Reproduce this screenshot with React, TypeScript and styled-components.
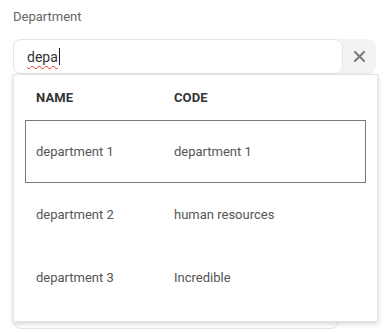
import React from "react";
import styled, { createGlobalStyle } from "styled-components";

const Global = createGlobalStyle`
  html, body { margin: 0; padding: 0; background: #ffffff; }
  body { font-family: Roboto, "Liberation Sans", Arial, sans-serif; }
  * { box-sizing: border-box; }
`;

const Page = styled.div`
  padding: 9px 12px 0 13px;
  width: 388px;
  height: 332px;
  overflow: hidden;
`;

const Label = styled.div`
  font-size: 13px;
  line-height: 16px;
  color: #666666;
  margin-bottom: 14px;
`;

const Field = styled.div`
  position: relative;
`;

const InputRow = styled.div`
  display: flex;
  width: 363px;
  height: 35px;
  background: #f2f3f5;
  border-radius: 8px;
`;

const InputBox = styled.div`
  width: 330px;
  height: 35px;
  background: #ffffff;
  border: 1px solid #e2e7ee;
  border-radius: 8px;
  display: flex;
  align-items: center;
  padding-left: 13px;
  font-size: 14px;
  color: #333333;
`;

const Typed = styled.span`
  text-decoration: underline wavy #e53935;
  text-decoration-thickness: 1px;
  text-underline-offset: 3px;
`;

const Caret = styled.span`
  display: inline-block;
  width: 1px;
  height: 17px;
  background: #222222;
  margin-left: 1px;
`;

const ClearButton = styled.button`
  flex: 1;
  border: none;
  background: transparent;
  display: flex;
  align-items: center;
  justify-content: center;
  padding: 0;
  cursor: pointer;
`;

const NextField = styled.div`
  margin-top: 14px;
  width: 326px;
  height: 241px;
  border: 1px solid #e2e7ee;
  border-radius: 8px;
  background: #ffffff;
`;

const Dropdown = styled.div`
  position: absolute;
  top: 35px;
  left: 0;
  width: 365px;
  height: 248px;
  background: #ffffff;
  border: 1px solid #e4e4e4;
  box-shadow: 0 2px 5px rgba(0, 0, 0, 0.16);
  padding: 0 11px;
  z-index: 2;
`;

const HeaderRow = styled.div`
  display: grid;
  grid-template-columns: 138px 1fr;
  height: 45px;
  align-items: center;
  padding: 0 11px;
  font-size: 13px;
  font-weight: 700;
  color: #333333;
  letter-spacing: 0.1px;
`;

const Row = styled.div<{ $selected?: boolean }>`
  display: grid;
  grid-template-columns: 138px 1fr;
  height: 63px;
  align-items: center;
  padding: 0 10px;
  font-size: 13px;
  color: #555555;
  border: 1px solid ${(p) => (p.$selected ? "#7a7a7a" : "transparent")};
`;

const rows = [
  { name: "department 1", code: "department 1" },
  { name: "department 2", code: "human resources" },
  { name: "department 3", code: "Incredible" },
];

export default function App() {
  return (
    <>
      <Global />
      <Page>
        <Label>Department</Label>
        <Field>
          <InputRow>
            <InputBox>
              <Typed>depa</Typed>
              <Caret />
            </InputBox>
            <ClearButton aria-label="Clear">
              <svg width="11" height="11" viewBox="0 0 11 11">
                <path d="M1 1 L10 10 M10 1 L1 10" stroke="#7b7b7b" strokeWidth="2" strokeLinecap="square" />
              </svg>
            </ClearButton>
          </InputRow>
          <Dropdown>
            <HeaderRow>
              <span>NAME</span>
              <span>CODE</span>
            </HeaderRow>
            {rows.map((r, i) => (
              <Row key={r.name} $selected={i === 0}>
                <span>{r.name}</span>
                <span>{r.code}</span>
              </Row>
            ))}
          </Dropdown>
          <NextField />
        </Field>
      </Page>
    </>
  );
}
